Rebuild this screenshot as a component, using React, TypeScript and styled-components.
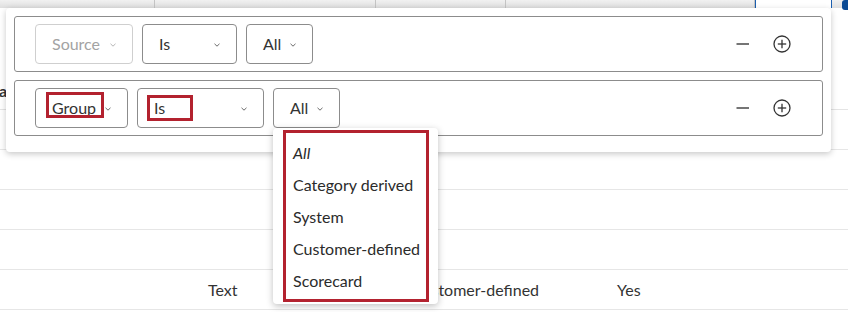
import React from "react";
import styled, { createGlobalStyle } from "styled-components";

const Global = createGlobalStyle`
  html, body { margin: 0; padding: 0; background: #fff; }
  body { font-family: Lato, "Open Sans", Arial, sans-serif; color: #333; }
  * { box-sizing: border-box; }
`;

const Page = styled.div`
  position: relative;
  width: 848px;
  height: 312px;
  overflow: hidden;
  background: #fff;
`;

/* ---------- background table ---------- */
const Table = styled.div`
  display: flex;
  flex-direction: column;
`;

const TopBar = styled.div`
  display: flex;
  height: 8px;
  background: linear-gradient(#f1f1f1, #dedede);
`;

const TopCell = styled.div<{ $w: number; $blue?: boolean }>`
  width: ${(p) => p.$w}px;
  flex: 0 0 auto;
  border-right: 1px solid ${(p) => (p.$blue ? "#1b5fb0" : "#c4c4c4")};
  border-left: 1px solid ${(p) => (p.$blue ? "#1b5fb0" : "transparent")};
  background: ${(p) => (p.$blue ? "#fff" : "transparent")};
`;

const TopButton = styled.div`
  margin-left: auto;
  width: 6px;
  height: 10px;
  background: #0b4a94;
  border-radius: 3px 0 0 3px;
`;

const HeaderRow = styled.div`
  height: 102px;
  border-bottom: 1px solid #e4e4e4;
  display: flex;
  align-items: flex-end;
  padding-bottom: 9px;
`;

const HeaderText = styled.span`
  font-weight: 700;
  font-size: 16px;
  margin-left: -1px;
  color: #333;
`;

const Row = styled.div`
  height: 40px;
  border-bottom: 1px solid #e6e6e6;
  display: grid;
  grid-template-columns: 208px 204px 205px 1fr;
  align-items: center;
  font-size: 16px;
  color: #333;
`;

const Cell = styled.div`
  white-space: nowrap;
`;

/* ---------- filter panel ---------- */
const Panel = styled.div`
  position: absolute;
  left: 6px;
  top: 8px;
  width: 825px;
  background: #fff;
  border-radius: 4px;
  box-shadow: 0 2px 6px rgba(0, 0, 0, 0.22);
  padding: 8px 8px 16px 8px;
  display: flex;
  flex-direction: column;
  gap: 8px;
  z-index: 2;
`;

const FilterRow = styled.div`
  height: 56px;
  border: 1px solid #8c8c8c;
  border-radius: 3px;
  display: flex;
  align-items: center;
  padding: 0 31px 0 20px;
  gap: 9px;
`;

const Select = styled.div<{ $w: number; $disabled?: boolean }>`
  position: relative;
  width: ${(p) => p.$w}px;
  height: 40px;
  border: 1px solid ${(p) => (p.$disabled ? "#cfcfcf" : "#8c8c8c")};
  border-radius: 4px;
  display: flex;
  align-items: center;
  justify-content: space-between;
  padding: 0 16px 1px 16px;
  font-size: 16px;
  color: ${(p) => (p.$disabled ? "#a3a3a3" : "#333")};
  background: #fff;
`;

const SelectLabel = styled.span`
  line-height: 1;
`;

const Chevron = ({ light }: { light?: boolean }) => (
  <svg width="6" height="4" viewBox="0 0 6 4" style={{ marginTop: 3 }}>
    <path d="M0.5 0.8 L3 3.2 L5.5 0.8" fill="none" stroke={light ? "#b5b5b5" : "#6a6a6a"} strokeWidth="1" />
  </svg>
);

const Annotation = styled.div<{ $l: number; $t: number; $w: number; $h: number }>`
  position: absolute;
  left: ${(p) => p.$l}px;
  top: ${(p) => p.$t}px;
  width: ${(p) => p.$w}px;
  height: ${(p) => p.$h}px;
  border: 3px solid #b3222f;
  pointer-events: none;
`;

const Actions = styled.div`
  margin-left: auto;
  display: flex;
  align-items: center;
  gap: 23px;
`;

const IconBtn = styled.div`
  display: flex;
  align-items: center;
  justify-content: center;
`;

const MinusIcon = () => (
  <svg width="14" height="18" viewBox="0 0 14 18">
    <line x1="0.5" y1="9" x2="13" y2="9" stroke="#3a3a3a" strokeWidth="1.4" />
  </svg>
);

const PlusIcon = () => (
  <svg width="18" height="18" viewBox="0 0 18 18">
    <circle cx="9" cy="9" r="8" fill="none" stroke="#333" strokeWidth="1.3" />
    <line x1="9" y1="4.8" x2="9" y2="13.2" stroke="#333" strokeWidth="1.3" />
    <line x1="4.8" y1="9" x2="13.2" y2="9" stroke="#333" strokeWidth="1.3" />
  </svg>
);

/* ---------- dropdown menu ---------- */
const Menu = styled.div`
  position: absolute;
  left: -1px;
  top: calc(100% + 1px);
  width: 165px;
  height: 176px;
  background: #fff;
  border-radius: 4px;
  box-shadow: 0 2px 7px rgba(0, 0, 0, 0.25);
  padding: 2px 0 0 10px;
  z-index: 3;
`;

const MenuHighlight = styled.div`
  width: 146px;
  height: 172px;
  border: 3px solid #b3222f;
  padding: 3px 0 0 7px;
  display: flex;
  flex-direction: column;
`;

const MenuItem = styled.div<{ $italic?: boolean }>`
  height: 32px;
  display: flex;
  align-items: center;
  font-size: 16px;
  color: #2b2b2b;
  white-space: nowrap;
  font-style: ${(p) => (p.$italic ? "italic" : "normal")};
`;

const menuItems = ["All", "Category derived", "System", "Customer-defined", "Scorecard"];

export default function App() {
  return (
    <>
      <Global />
      <Page>
        <Table>
          <TopBar>
            <TopCell $w={155} />
            <TopCell $w={221} />
            <TopCell $w={130} />
            <TopCell $w={249} />
            <TopCell $w={77} $blue />
            <TopButton />
          </TopBar>
          <HeaderRow>
            <HeaderText>a</HeaderText>
          </HeaderRow>
          <Row />
          <Row />
          <Row />
          <Row />
          <Row>
            <Cell />
            <Cell>Text</Cell>
            <Cell>Customer-defined</Cell>
            <Cell>Yes</Cell>
          </Row>
        </Table>

        <Panel>
          <FilterRow>
            <Select $w={98} $disabled>
              <SelectLabel>Source</SelectLabel>
              <Chevron light />
            </Select>
            <Select $w={95}>
              <SelectLabel>Is</SelectLabel>
              <Chevron />
            </Select>
            <Select $w={67}>
              <SelectLabel>All</SelectLabel>
              <Chevron />
            </Select>
            <Actions>
              <IconBtn><MinusIcon /></IconBtn>
              <IconBtn><PlusIcon /></IconBtn>
            </Actions>
          </FilterRow>
          <FilterRow>
            <Select $w={93}>
              <SelectLabel>Group</SelectLabel>
              <Chevron />
              <Annotation $l={10} $t={3} $w={58} $h={26} />
            </Select>
            <Select $w={127}>
              <SelectLabel>Is</SelectLabel>
              <Chevron />
              <Annotation $l={9} $t={6} $w={46} $h={26} />
            </Select>
            <Select $w={67}>
              <SelectLabel>All</SelectLabel>
              <Chevron />
              <Menu>
                <MenuHighlight>
                  {menuItems.map((m, i) => (
                    <MenuItem key={m} $italic={i === 0}>{m}</MenuItem>
                  ))}
                </MenuHighlight>
              </Menu>
            </Select>
            <Actions>
              <IconBtn><MinusIcon /></IconBtn>
              <IconBtn><PlusIcon /></IconBtn>
            </Actions>
          </FilterRow>
        </Panel>
      </Page>
    </>
  );
}
